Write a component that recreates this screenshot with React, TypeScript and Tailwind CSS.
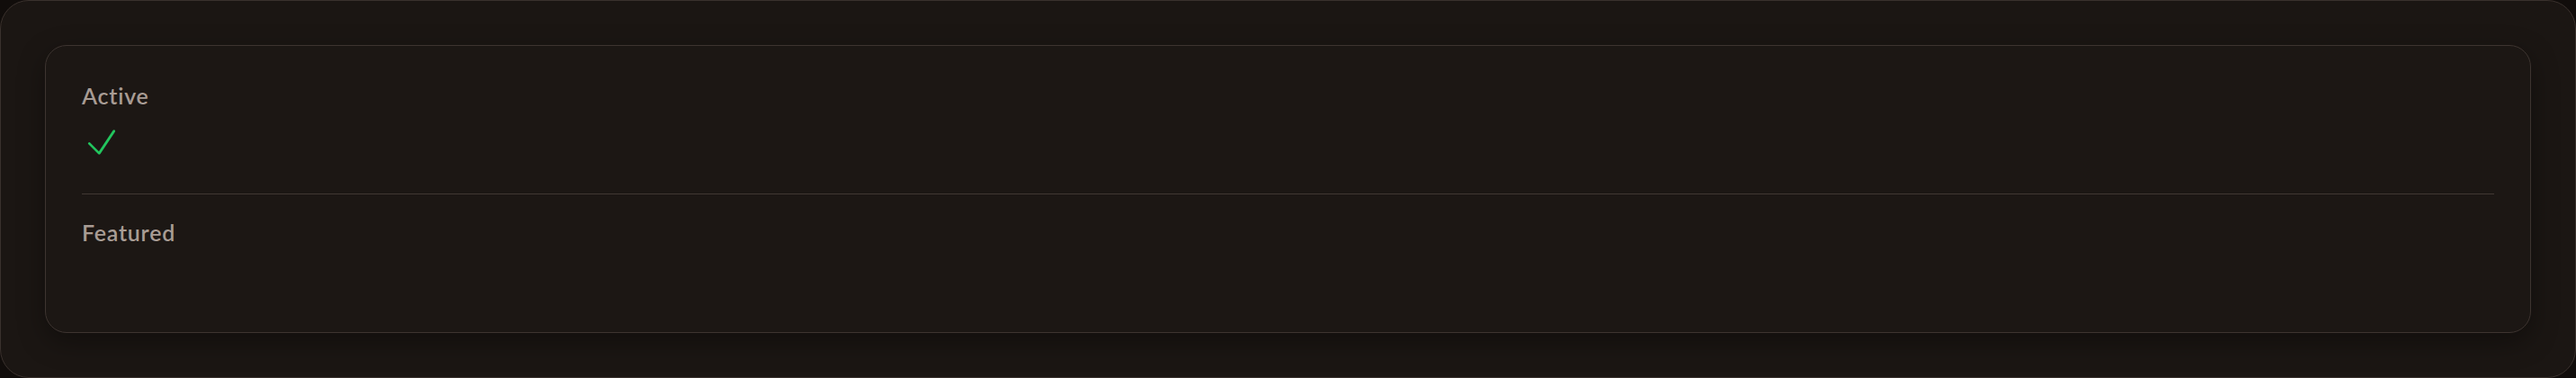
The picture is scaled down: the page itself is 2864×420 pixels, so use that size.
/** Label above, value below — one field of the flags panel. */
function FlagRow({ label, children }: { label: string; children?: React.ReactNode }) {
  return (
    <div className="flex flex-col">
      <p className="text-[25px] font-semibold leading-[30px] tracking-[0.03em] text-[#a89c94]">{label}</p>
      <div className="mt-[15px] h-[44px]">{children}</div>
    </div>
  );
}

function CheckMark() {
  return (
    <svg
      viewBox="0 0 24 24"
      fill="none"
      stroke="currentColor"
      strokeWidth={1.5}
      strokeLinecap="round"
      strokeLinejoin="round"
      className="h-[44px] w-[44px] text-[#22c55e]"
    >
      <path d="m4.5 12.75 6 6 9-13.5" />
    </svg>
  );
}

export default function App() {
  return (
    <div className="h-[420px] w-full bg-[#110d0b] font-['Lato','Noto_Sans',sans-serif]">
      <div className="h-full rounded-[32px] border border-[#3a312d] bg-[#1b1613] p-[49px]">
        <div className="rounded-[24px] border border-[#3d3430] bg-[#1c1714] px-[40px] pt-[40px] pb-[37px] shadow-[0_10px_30px_rgba(0,0,0,0.35)]">
          <div className="pb-[35px]">
            <FlagRow label="Active">
              <CheckMark />
            </FlagRow>
          </div>
          <div className="h-px bg-[#413833]" />
          <div className="pt-[27px]">
            <FlagRow label="Featured" />
          </div>
        </div>
      </div>
    </div>
  );
}
